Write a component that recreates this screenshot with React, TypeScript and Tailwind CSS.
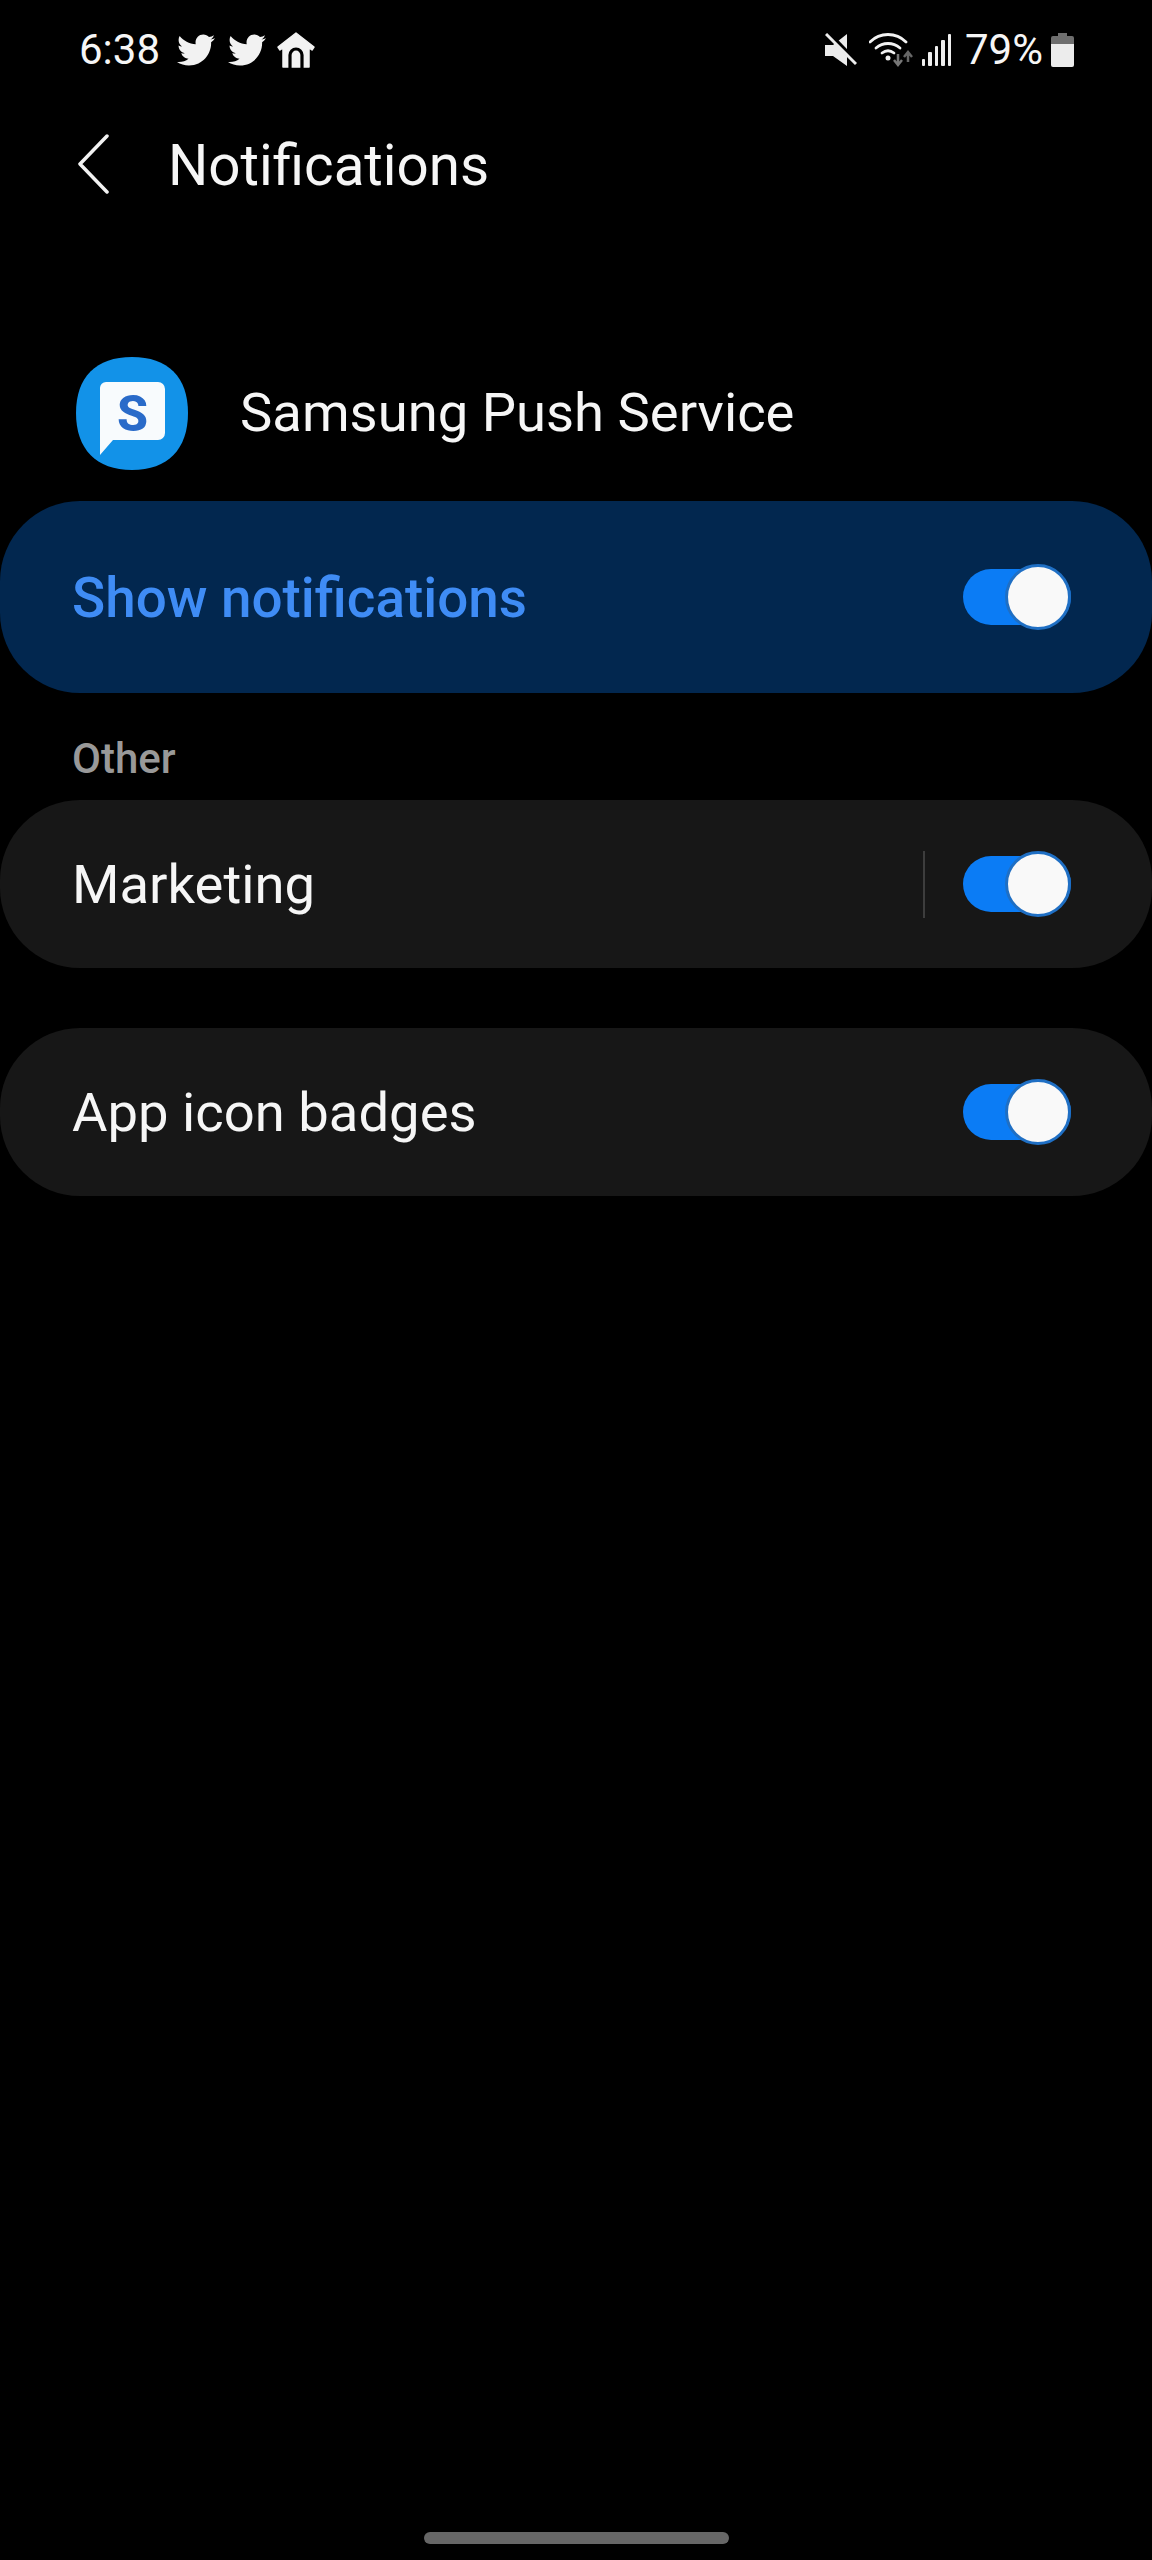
import { FaTwitter } from "react-icons/fa";

const font = "font-['Roboto','Liberation_Sans',sans-serif]";

function Toggle() {
  return (
    <div className="relative h-[56px] w-[108px] shrink-0 rounded-full bg-[#0b7cf5]">
      <div className="absolute right-0 top-[-5px] h-[66px] w-[66px] rounded-full border-[3px] border-[#1f6fc4] bg-[#f9f9f9]" />
    </div>
  );
}

function HomeIcon() {
  return (
    <svg width="40" height="36" viewBox="0 0 40 36" className="ml-[10px]">
      <path
        fill="#f2f2f2"
        stroke="#f2f2f2"
        strokeWidth="1.500"
        strokeLinejoin="round"
        d="M20 1L38 15l-2 3-3-2v19H7V16l-3 2-2-3z"
      />
      <path d="M14 36V23a6 6 0 0 1 12 0v13" fill="none" stroke="#000" strokeWidth="3.200" />
    </svg>
  );
}

function MuteIcon() {
  return (
    <svg width="32" height="34" viewBox="0 0 32 34">
      <path fill="#ececec" d="M0 12h8L22 1v32L8 23H0z" />
      <path d="M3 0l29 30" stroke="#000" strokeWidth="5" />
      <path d="M1 1l30 30" stroke="#ececec" strokeWidth="3" />
    </svg>
  );
}

function WifiIcon() {
  return (
    <svg width="44" height="36" viewBox="0 0 44 36" fill="none">
      <path d="M1 10C11 0 27 0 37 10" stroke="#f2f2f2" strokeWidth="2.800" strokeLinecap="round" />
      <path d="M7 16c7-6 17-6 24 0" stroke="#f2f2f2" strokeWidth="2.800" strokeLinecap="round" />
      <path d="M13 21c4-3 8-3 12 0" stroke="#f2f2f2" strokeWidth="2.800" strokeLinecap="round" />
      <circle cx="19" cy="26" r="2.500" fill="#f2f2f2" />
      <path d="M29 22v10M25 28l4 5 4-5" stroke="#777" strokeWidth="2.500" />
      <path d="M39 30V20M35 25l4-5 4 5" stroke="#666" strokeWidth="2.500" />
    </svg>
  );
}

function SignalIcon() {
  return (
    <div className="ml-[9px] flex h-[32px] items-end gap-[3px]">
      <div className="h-[7px] w-[3.500px] rounded-[1px] bg-[#efefef]" />
      <div className="h-[14px] w-[3.500px] rounded-[1px] bg-[#efefef]" />
      <div className="h-[20px] w-[3.500px] rounded-[1px] bg-[#efefef]" />
      <div className="h-[26px] w-[3.500px] rounded-[1px] bg-[#efefef]" />
      <div className="h-[32px] w-[3.500px] rounded-[1px] bg-[#efefef]" />
    </div>
  );
}

function BatteryIcon() {
  return (
    <svg width="23" height="34" viewBox="0 0 23 34">
      <path fill="#6e6e6e" d="M7 0h9v3h5a2 2 0 0 1 2 2v6H0V5a2 2 0 0 1 2-2h5z" />
      <path fill="#ececec" d="M0 11h23v21a2 2 0 0 1-2 2H2a2 2 0 0 1-2-2z" />
    </svg>
  );
}

function AppIcon() {
  return (
    <svg width="112" height="113" viewBox="0 0 112 113">
      <path
        fill="#1292e8"
        d="M56 0C92 0 112 20 112 56S92 113 56 113 0 92 0 56 20 0 56 0z"
      />
      <path
        fill="#f8fbfd"
        d="M30 25h52a7 7 0 0 1 7 7v44a7 7 0 0 1-7 7H37L24 98V31a6 6 0 0 1 6-6z"
      />
      <text
        x="56.500"
        y="74"
        textAnchor="middle"
        fontFamily="Roboto, sans-serif"
        fontWeight="800"
        fontSize="50"
        fill="#2a6bc9"
      >
        S
      </text>
    </svg>
  );
}

export default function App() {
  return (
    <div className={`${font} flex h-[2560px] w-[1152px] flex-col overflow-hidden bg-black text-[#f6f6f6]`}>
      {/* Status bar */}
      <div className="flex h-[100px] items-center justify-between pl-[79px] pr-[78px]">
        <div className="flex items-center">
          <span className="text-[42px] leading-none">6:38</span>
          <FaTwitter className="ml-[17px] h-[38px] w-[38px] text-[#f2f2f2]" />
          <FaTwitter className="ml-[13px] h-[38px] w-[38px] text-[#f2f2f2]" />
          <HomeIcon />
        </div>
        <div className="flex items-center">
          <MuteIcon />
          <div className="ml-[12px]">
            <WifiIcon />
          </div>
          <SignalIcon />
          <span className="ml-[14px] text-[42px] leading-none">79%</span>
          <div className="ml-[8px]">
            <BatteryIcon />
          </div>
        </div>
      </div>

      {/* Header */}
      <div className="mt-[14px] flex h-[100px] items-center pl-[76px]">
        <svg width="36" height="60" viewBox="0 0 36 60" fill="none">
          <path d="M31 2L4 30l27 28" stroke="#f2f2f2" strokeWidth="3.500" strokeLinecap="round" strokeLinejoin="round" />
        </svg>
        <h1 className="ml-[56px] mt-[5px] text-[56.500px] font-normal leading-none">Notifications</h1>
      </div>

      {/* App row */}
      <div className="mt-[143px] flex h-[113px] items-center pl-[76px]">
        <AppIcon />
        <span className="ml-[52px] text-[54.400px] leading-none">Samsung Push Service</span>
      </div>

      {/* Master switch */}
      <div className="mt-[31px] flex h-[192px] items-center justify-between rounded-[80px] bg-[#02274f] pl-[72px] pr-[81px]">
        <span className="pt-[2px] text-[54.800px] font-medium leading-none text-[#3f8cf5]">Show notifications</span>
        <Toggle />
      </div>

      <div className="flex h-[107px] items-start pl-[72px] pt-[45px] text-[42px] font-medium leading-none text-[#999999]">
        Other
      </div>

      <div className="flex h-[168px] items-center rounded-[80px] bg-[#171717] pl-[72px] pr-[81px]">
        <span className="pt-[2px] text-[54.400px] leading-none">Marketing</span>
        <div className="ml-auto mr-[38px] h-[67px] w-[2px] bg-[#3d3d3d]" />
        <Toggle />
      </div>

      <div className="mt-[60px] flex h-[168px] items-center justify-between rounded-[80px] bg-[#171717] pl-[72px] pr-[81px]">
        <span className="pt-[2px] text-[54.400px] leading-none">App icon badges</span>
        <Toggle />
      </div>

      {/* Gesture bar */}
      <div className="mb-[16px] mt-auto flex justify-center">
        <div className="h-[12px] w-[305px] rounded-full bg-[#666666]" />
      </div>
    </div>
  );
}
